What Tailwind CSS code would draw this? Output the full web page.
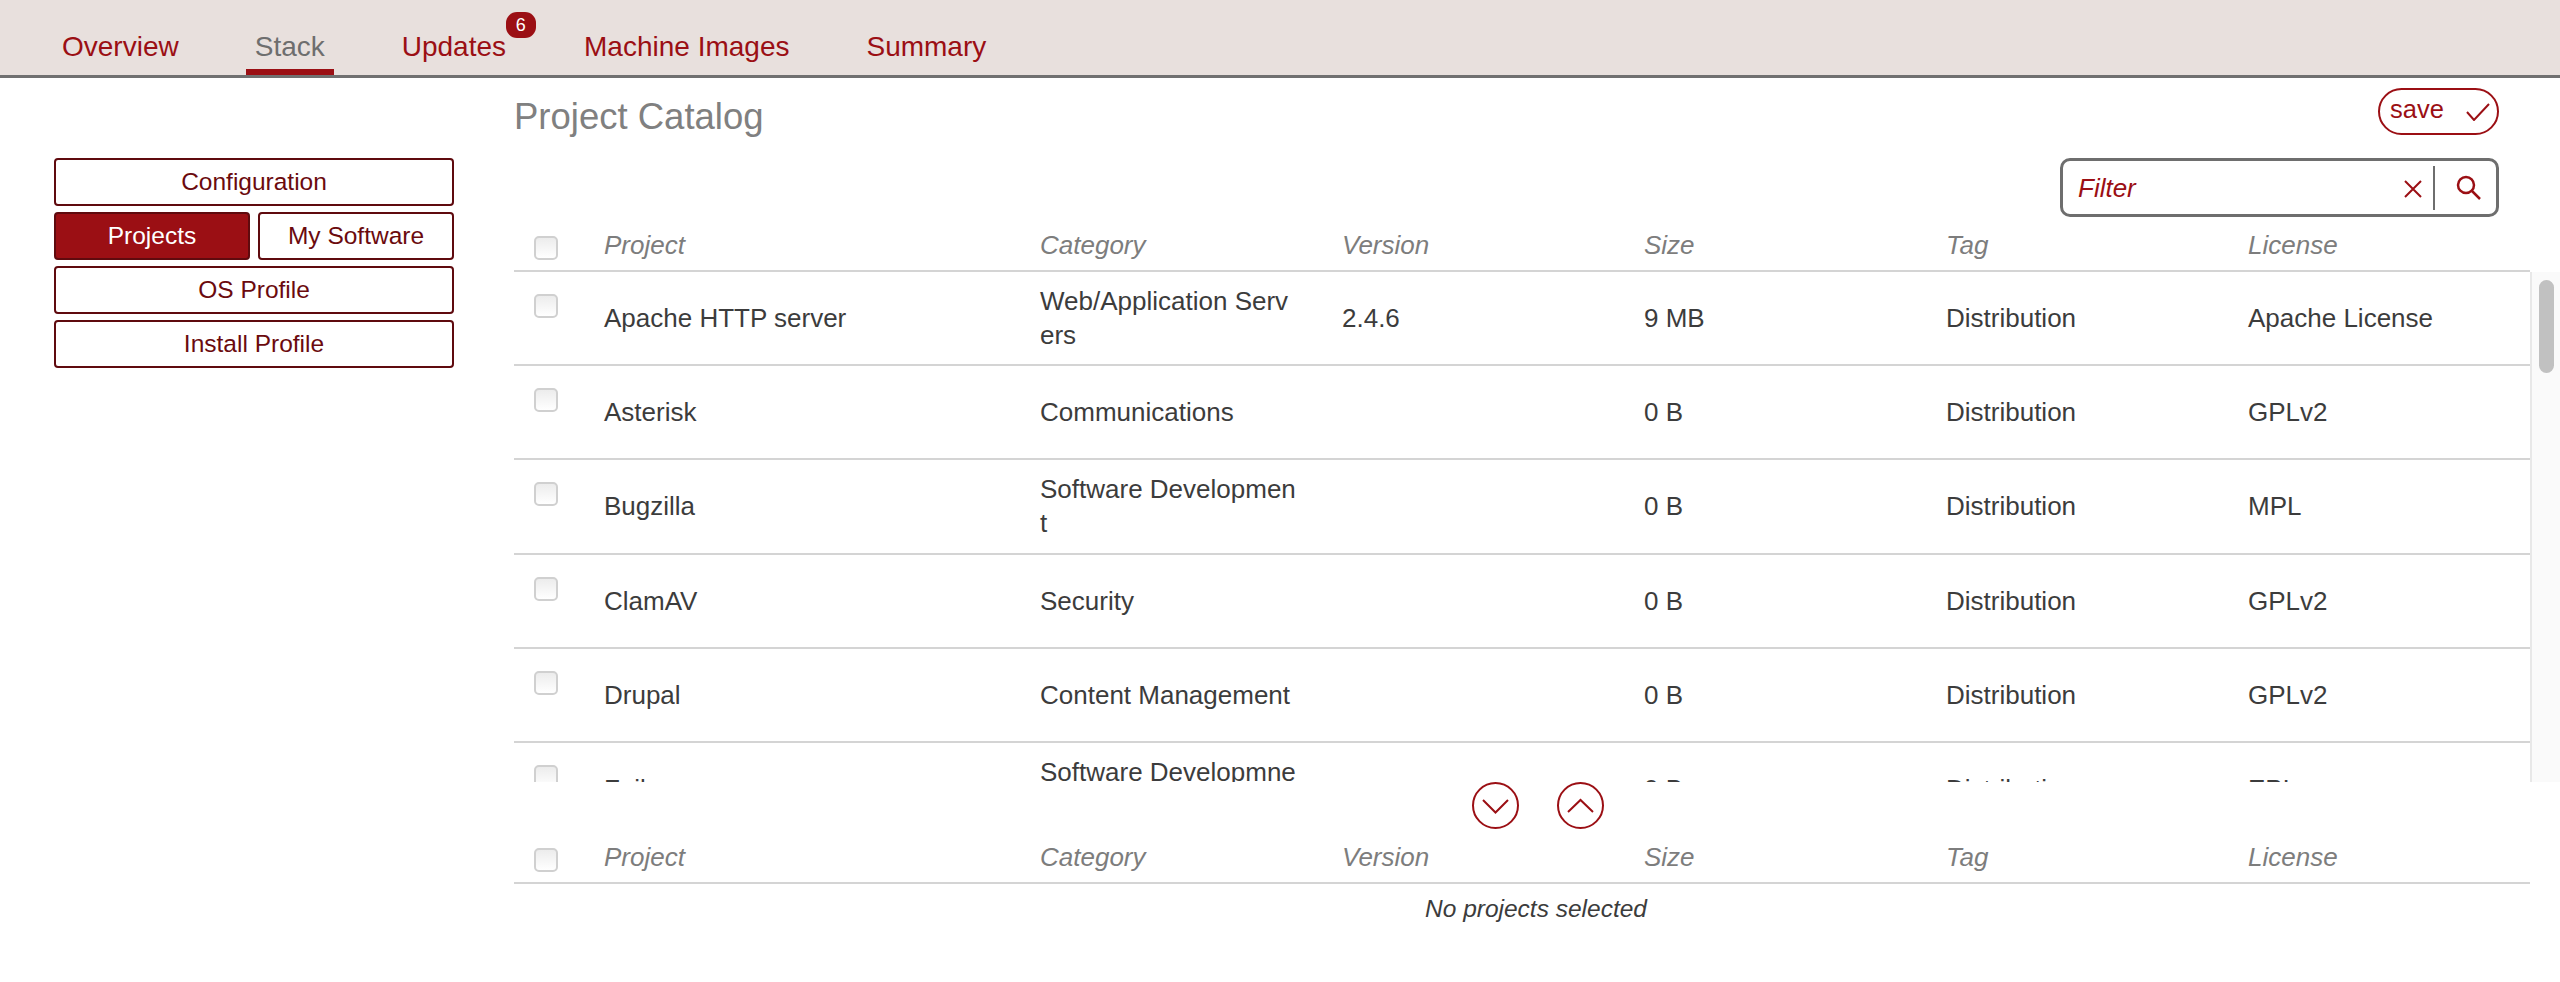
<!DOCTYPE html>
<html lang="en">

<head>
    <meta charset="UTF-8" />
    <title>Project Catalog</title>
    <script src="https://cdn.jsdelivr.net/npm/@tailwindcss/browser@4"></script>
</head>

<body class="bg-white font-['Liberation_Sans',Arial,sans-serif] h-[982px] overflow-hidden">

    <!-- Tabs -->
    <nav class="h-[78px] bg-[#e8e0dd] border-b-[3px] border-[#707070] flex items-end pl-[53px] gap-[59px] text-[28px] text-[#9b0f14]">
        <a href="#" class="h-[75px] px-[9px] pt-[28px] leading-[38px]">Overview</a>
        <a href="#" class="-ml-[1px] h-[75px] px-[9px] pt-[28px] leading-[38px] text-[#6e6e6e] border-b-[6px] border-[#9b0f14]">Stack</a>
        <a href="#" class="relative h-[75px] px-[9px] pt-[28px] leading-[38px]">Updates
            <span class="absolute left-[113px] top-[12px] w-[30px] h-[26px] rounded-[11px] bg-[#9b0f14] text-white text-[18px] leading-[26px] text-center">6</span>
        </a>
        <a href="#" class="ml-[1px] h-[75px] px-[9px] pt-[28px] leading-[38px]">Machine Images</a>
        <a href="#" class="h-[75px] px-[9px] pt-[28px] leading-[38px]">Summary</a>
    </nav>

    <div class="flex">
        <!-- Sidebar -->
        <aside class="w-[514px] shrink-0 pl-[54px] pt-[80px]">
            <div class="w-[400px] flex flex-col gap-[6px] text-[24.5px] text-[#6b0a0e]">
                <button class="h-[48px] border-[2px] border-[#5f0a0e] rounded-[4px]">Configuration</button>
                <div class="flex gap-[8px]">
                    <button class="w-[196px] h-[48px] border-[2px] border-[#5f0a0e] rounded-[4px] bg-[#9b0f14] text-white">Projects</button>
                    <button class="w-[196px] h-[48px] border-[2px] border-[#5f0a0e] rounded-[4px]">My Software</button>
                </div>
                <button class="h-[48px] border-[2px] border-[#5f0a0e] rounded-[4px]">OS Profile</button>
                <button class="h-[48px] border-[2px] border-[#5f0a0e] rounded-[4px]">Install Profile</button>
            </div>
        </aside>

        <main class="flex-1">
            <!-- Title and save -->
            <div class="h-[80px] flex justify-between pr-[61px]">
                <h1 class="text-[36.5px] leading-[40px] pt-[19px] text-[#808080]">Project Catalog</h1>
                <button class="mt-[10px] w-[121px] h-[47px] border-[2px] border-[#9b0f14] rounded-full flex items-center justify-between pl-[10px] pr-[7px] pb-[5px] text-[25.5px] text-[#9b0f14]">
                    save
                    <svg class="mt-[6px]" width="24" height="18" viewBox="0 0 24 18" fill="none" stroke="#9b0f14" stroke-width="2"><path d="M1 9l7 8L23 1" /></svg>
                </button>
            </div>

            <!-- Filter -->
            <div class="h-[59px] flex justify-end pr-[61px]">
                <div class="w-[439px] border-[3px] border-[#6e6e6e] rounded-[10px] flex items-center pl-[15px] text-[26px] italic text-[#9b0f14]">
                    <span class="flex-1 pt-[2px]">Filter</span>
                    <svg class="mt-[2px] mr-[-1px]" width="18" height="18" viewBox="0 0 18 18" fill="none" stroke="#9b0f14" stroke-width="2"><path d="M1 1l16 16M17 1L1 17" /></svg>
                    <span class="w-[2px] h-[44px] bg-[#6e6e6e] ml-[12px] mr-[21px]"></span>
                    <svg class="mr-[15px]" width="25" height="25" viewBox="0 0 25 25" fill="none" stroke="#9b0f14" stroke-width="2.5"><circle cx="10" cy="10" r="8" /><path d="M15.5 15.5L24 24" /></svg>
                </div>
            </div>

            <!-- Catalog header -->
            <div class="w-[2016px] h-[55px] grid grid-cols-[90px_436px_302px_302px_302px_302px_282px] items-end pb-[5px] border-b-[2px] border-[#d4d4d4] text-[26px] italic text-[#7d7d7d]">
                <span class="w-[24px] h-[24px] ml-[20px] mb-[5px] rounded-[5px] border-[2px] border-[#d0d0d0] bg-gradient-to-b from-[#ececec] to-white"></span>
                <span>Project</span><span>Category</span><span>Version</span><span>Size</span><span>Tag</span><span>License</span>
            </div>

            <!-- Catalog rows -->
            <div class="relative h-[510px] overflow-hidden text-[26px] leading-[34px] text-[#3c3c3c]">
                <div class="absolute right-0 top-0 bottom-0 w-[30px] bg-[#fafafa] border-l-[2px] border-[#e8e8e8]">
                    <div class="absolute left-[7px] top-[8px] w-[15px] h-[93px] rounded-full bg-[#c1c1c1]"></div>
                </div>
                <div class="w-[2016px]">
                    <div class="h-[94.2px] grid grid-cols-[90px_436px_302px_302px_302px_302px_282px] items-center border-b-[2px] border-[#d4d4d4]">
                        <span class="w-[24px] h-[24px] ml-[20px] mb-[24px] rounded-[5px] border-[2px] border-[#d0d0d0] bg-gradient-to-b from-[#ececec] to-white"></span>
                        <span>Apache HTTP server</span><span class="w-[258px] break-all">Web/Application Servers</span><span>2.4.6</span><span>9 MB</span><span>Distribution</span><span>Apache License</span>
                    </div>
                    <div class="h-[94.2px] grid grid-cols-[90px_436px_302px_302px_302px_302px_282px] items-center border-b-[2px] border-[#d4d4d4]">
                        <span class="w-[24px] h-[24px] ml-[20px] mb-[24px] rounded-[5px] border-[2px] border-[#d0d0d0] bg-gradient-to-b from-[#ececec] to-white"></span>
                        <span>Asterisk</span><span class="w-[258px] break-all">Communications</span><span></span><span>0 B</span><span>Distribution</span><span>GPLv2</span>
                    </div>
                    <div class="h-[94.2px] grid grid-cols-[90px_436px_302px_302px_302px_302px_282px] items-center border-b-[2px] border-[#d4d4d4]">
                        <span class="w-[24px] h-[24px] ml-[20px] mb-[24px] rounded-[5px] border-[2px] border-[#d0d0d0] bg-gradient-to-b from-[#ececec] to-white"></span>
                        <span>Bugzilla</span><span class="w-[258px] break-all">Software Development</span><span></span><span>0 B</span><span>Distribution</span><span>MPL</span>
                    </div>
                    <div class="h-[94.2px] grid grid-cols-[90px_436px_302px_302px_302px_302px_282px] items-center border-b-[2px] border-[#d4d4d4]">
                        <span class="w-[24px] h-[24px] ml-[20px] mb-[24px] rounded-[5px] border-[2px] border-[#d0d0d0] bg-gradient-to-b from-[#ececec] to-white"></span>
                        <span>ClamAV</span><span class="w-[258px] break-all">Security</span><span></span><span>0 B</span><span>Distribution</span><span>GPLv2</span>
                    </div>
                    <div class="h-[94.2px] grid grid-cols-[90px_436px_302px_302px_302px_302px_282px] items-center border-b-[2px] border-[#d4d4d4]">
                        <span class="w-[24px] h-[24px] ml-[20px] mb-[24px] rounded-[5px] border-[2px] border-[#d0d0d0] bg-gradient-to-b from-[#ececec] to-white"></span>
                        <span>Drupal</span><span class="w-[258px] break-all">Content Management</span><span></span><span>0 B</span><span>Distribution</span><span>GPLv2</span>
                    </div>
                    <div class="h-[94.2px] grid grid-cols-[90px_436px_302px_302px_302px_302px_282px] items-center border-b-[2px] border-[#d4d4d4]">
                        <span class="w-[24px] h-[24px] ml-[20px] mb-[24px] rounded-[5px] border-[2px] border-[#d0d0d0] bg-gradient-to-b from-[#ececec] to-white"></span>
                        <span>Fail</span><span class="w-[258px] break-all">Software Developmnet</span><span></span><span>0 B</span><span>Distribution</span><span>EPL</span>
                    </div>
                </div>
            </div>

            <!-- Move buttons -->
            <div class="w-[2016px] h-[47px] flex justify-center gap-[38px] pl-[31px]">
                <button class="w-[47px] h-[47px] rounded-full border-[2px] border-[#9b0f14] flex items-center justify-center">
                    <svg width="27" height="16" viewBox="0 0 27 16" fill="none" stroke="#9b0f14" stroke-width="2"><path d="M1 2l12.5 12.5L26 2" /></svg>
                </button>
                <button class="w-[47px] h-[47px] rounded-full border-[2px] border-[#9b0f14] flex items-center justify-center">
                    <svg width="27" height="16" viewBox="0 0 27 16" fill="none" stroke="#9b0f14" stroke-width="2"><path d="M1 14L13.5 2 26 14" /></svg>
                </button>
            </div>

            <!-- Selected header -->
            <div class="w-[2016px] h-[55px] grid grid-cols-[90px_436px_302px_302px_302px_302px_282px] items-end pb-[5px] border-b-[2px] border-[#d4d4d4] text-[26px] italic text-[#7d7d7d]">
                <span class="w-[24px] h-[24px] ml-[20px] mb-[5px] rounded-[5px] border-[2px] border-[#d0d0d0] bg-gradient-to-b from-[#ececec] to-white"></span>
                <span>Project</span><span>Category</span><span>Version</span><span>Size</span><span>Tag</span><span>License</span>
            </div>
            <p class="w-[2044px] text-center pt-[10px] text-[24.5px] leading-[30px] italic text-[#3c3c3c]">No projects selected</p>
        </main>
    </div>

</body>

</html>
